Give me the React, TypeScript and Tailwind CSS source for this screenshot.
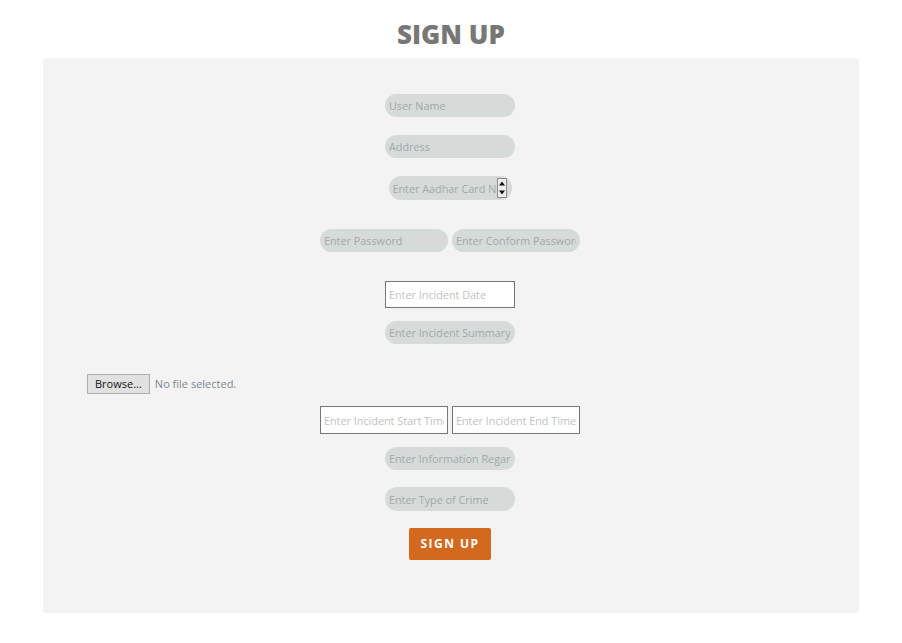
import React from "react";

const pillBase =
  "h-[23px] rounded-full bg-[#d6dbda] px-[4px] text-[10.8px] text-[#999] placeholder:text-[#a3a8a7] outline-none";
const pill = `${pillBase} w-[130px]`;
const box =
  "h-[28px] w-[128px] border border-[#767676] bg-white px-[3px] text-[10.8px] placeholder:text-[#c2c2c2] outline-none";

export default function App() {
  return (
    <div
      className="min-h-[643px] w-[902px] bg-white"
      style={{ fontFamily: "'Open Sans', 'Liberation Sans', sans-serif" }}
    >
      <h1 className="pt-[16px] text-center text-[26px] font-extrabold leading-[36px] text-[#777]">
        SIGN UP
      </h1>
      <div className="mx-[43px] mt-[6px] flex h-[555px] flex-col items-center rounded-[4px] bg-[#f3f3f3] pr-[2px] pt-[36px]">
        <input className={pill} placeholder="User Name" />
        <input className={`${pill} mt-[18px]`} placeholder="Address" />
        <div className="mt-[18px] flex h-[24px] w-[123px] items-center rounded-full bg-[#d6dbda] pl-[4px] pr-[5px]">
          <input
            className="h-full min-w-0 flex-1 bg-transparent text-[10.8px] outline-none placeholder:text-[#a3a8a7]"
            placeholder="Enter Aadhar Card No"
          />
          <div className="flex h-[20px] w-[10px] flex-col border border-[#888] bg-[#eee]">
            <svg viewBox="0 0 8 8" className="h-[9px] w-[8px]">
              <path d="M1 6 L4 2 L7 6 Z" fill="#111" />
            </svg>
            <svg viewBox="0 0 8 8" className="h-[9px] w-[8px]">
              <path d="M1 2 L4 6 L7 2 Z" fill="#111" />
            </svg>
          </div>
        </div>
        <div className="mt-[29px] flex gap-[4px]">
          <input className={`${pillBase} w-[128px]`} placeholder="Enter Password" />
          <input className={`${pillBase} w-[128px]`} placeholder="Enter Conform Password" />
        </div>
        <input className="mt-[29px] h-[27px] w-[130px] border border-[#767676] bg-white px-[3px] text-[10.8px] outline-none placeholder:text-[#c2c2c2]" placeholder="Enter Incident Date" />
        <input className={`${pill} mt-[13px]`} placeholder="Enter Incident Summary" />
        <div className="mt-[30px] flex w-full items-center pl-[44px]">
          <button className="h-[20px] border border-[#adadad] bg-[#e1e1e1] px-[7px] text-[11px] leading-[18px] text-[#111]">
            Browse...
          </button>
          <span className="ml-[5px] text-[11px] text-[#7c8690]">No file selected.</span>
        </div>
        <div className="mt-[12px] flex gap-[4px]">
          <input className={box} placeholder="Enter Incident Start Time" />
          <input className={box} placeholder="Enter Incident End Time" />
        </div>
        <input className={`${pill} mt-[13px]`} placeholder="Enter Information Regarding" />
        <input className={`${pillBase} mt-[17px] h-[24px] w-[130px]`} placeholder="Enter Type of Crime" />
        <button className="mt-[17px] h-[32px] w-[82px] rounded-[2px] bg-[#d2691e] text-[12px] font-bold tracking-[1.5px] text-white">
          SIGN UP
        </button>
      </div>
    </div>
  );
}
